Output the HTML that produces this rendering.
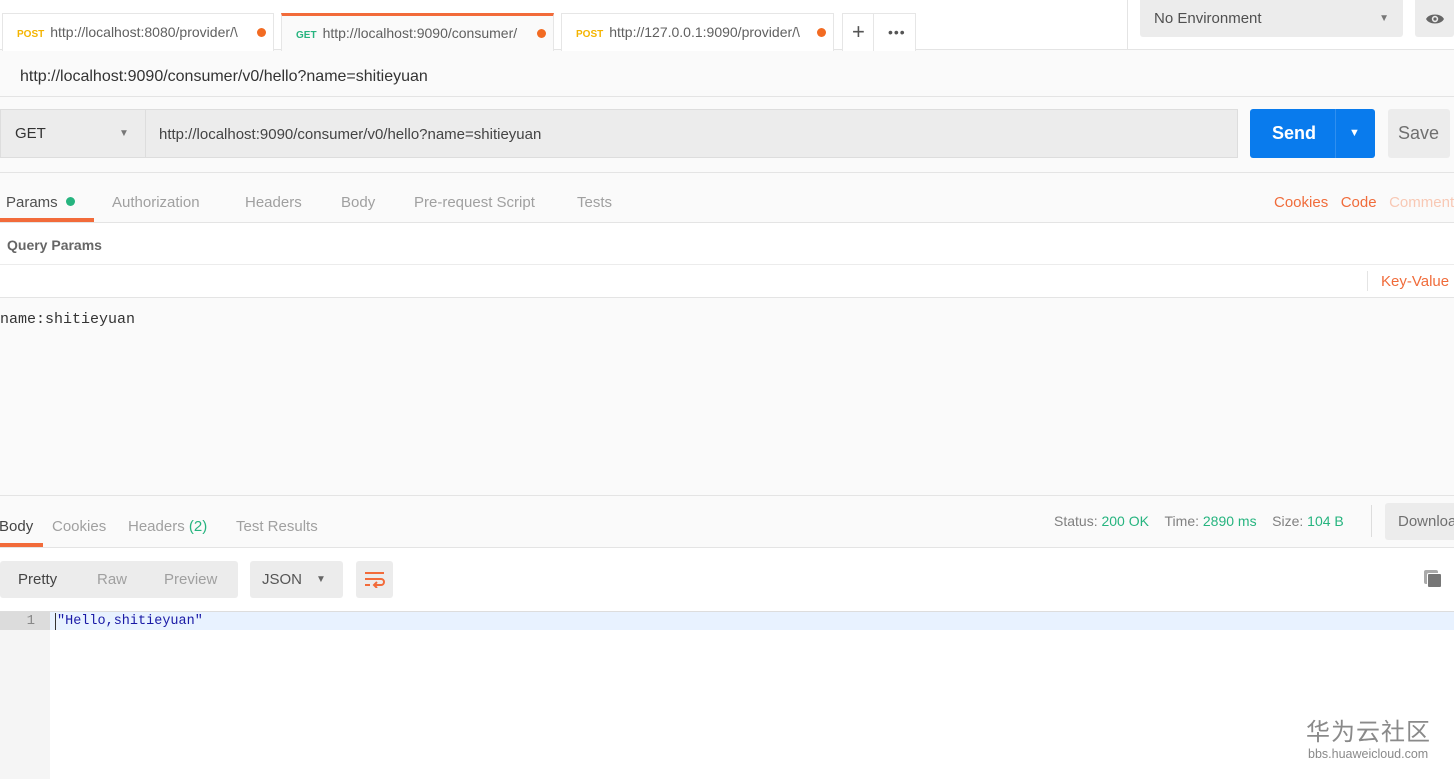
<!DOCTYPE html>
<html><head><meta charset="utf-8"><style>
*{margin:0;padding:0;box-sizing:border-box}
body{width:1454px;height:779px;overflow:hidden;background:#fafafa;font-family:"Liberation Sans",sans-serif;position:relative;color:#505050}
.a{position:absolute}
.tab{position:absolute;top:13px;height:38px;background:#fff;border:1px solid #e6e6e6;border-bottom:none;font-size:14px;color:#606060;line-height:36px;padding-left:14px;white-space:nowrap;overflow:hidden}
.m{font-size:10px;font-weight:bold;margin-right:6px}
.dot{position:absolute;right:7px;top:14px;width:9px;height:9px;border-radius:50%;background:#f26b22}
.gray{color:#a0a0a0}
.or{color:#f06c3b}
.gr{color:#26b47f}
</style></head><body>
<div class="a" style="left:0;top:0;width:1454px;height:50px;background:#fff;border-bottom:1px solid #e4e4e4"></div>
<div class="tab" style="left:2px;width:272px"><span class="m" style="color:#f4b400">POST</span>http://localhost:8080/provider/\<span class="dot"></span></div>
<div class="tab" style="left:281px;width:273px;border-top:3px solid #f26b3a;background:#fafafa;line-height:34px"><span class="m" style="color:#26b47f">GET</span>http://localhost:9090/consumer/<span class="dot" style="top:13px"></span></div>
<div class="tab" style="left:561px;width:273px"><span class="m" style="color:#f4b400">POST</span>http://127.0.0.1:9090/provider/\<span class="dot"></span></div>
<div class="tab" style="left:842px;width:74px;padding:0;font-size:22px;color:#555"><span class="a" style="left:9px;top:0">+</span><span class="a" style="left:30px;top:0;height:38px;border-left:1px solid #e6e6e6"></span><span class="a" style="left:45px;top:0;font-size:14px;letter-spacing:1px">•••</span></div>
<div class="a" style="left:1127px;top:0;width:1px;height:50px;background:#e4e4e4"></div>
<div class="a" style="left:1140px;top:0;width:263px;height:37px;background:#ececec;border-radius:0 0 3px 3px;font-size:15px;color:#505050;line-height:38px;padding-left:14px">No Environment<span class="a" style="right:14px;top:0;font-size:10px;color:#777">▼</span></div>
<div class="a" style="left:1415px;top:0;width:39px;height:37px;background:#ececec;border-radius:0 0 3px 3px"><svg class="a" style="left:10px;top:12px" width="20" height="14" viewBox="0 0 20 14"><path d="M1 7C4 1 16 1 19 7C16 13 4 13 1 7Z" fill="#666"/><circle cx="10" cy="7" r="3.2" fill="#ececec"/><circle cx="10" cy="7" r="1.6" fill="#666"/></svg></div>
<div class="a" style="left:20px;top:68px;font-size:16px;color:#333">http://localhost:9090/consumer/v0/hello?name=shitieyuan</div>
<div class="a" style="left:0;top:96px;width:1454px;height:1px;background:#e4e4e4"></div>
<div class="a" style="left:0;top:109px;width:146px;height:49px;background:#ececec;border:1px solid #ddd;font-size:15px;color:#333;line-height:48px;padding-left:14px">GET<span class="a" style="left:118px;top:0;font-size:10px;color:#777">▼</span></div>
<div class="a" style="left:146px;top:109px;width:1092px;height:49px;background:#ececec;border:1px solid #ddd;border-left:none;font-size:15px;color:#444;line-height:49px;padding-left:13px">http://localhost:9090/consumer/v0/hello?name=shitieyuan</div>
<div class="a" style="left:1250px;top:109px;width:125px;height:49px;background:#097bed;border-radius:3px;color:#fff;font-size:18px;font-weight:bold;line-height:49px;padding-left:22px">Send<span class="a" style="left:85px;top:0;height:49px;border-left:1px solid #2f8ff0"></span><span class="a" style="left:99px;top:0;font-size:11px">▼</span></div>
<div class="a" style="left:1388px;top:109px;width:62px;height:49px;background:#ececec;border-radius:3px;color:#707070;font-size:18px;line-height:49px;padding-left:10px">Save</div>
<div class="a" style="left:0;top:172px;width:1454px;height:1px;background:#e4e4e4"></div>
<div class="a" style="left:0;top:194px;font-size:15px;white-space:nowrap"><span style="position:absolute;left:6px;color:#505050">Params</span><span style="position:absolute;left:66px;top:3px;width:9px;height:9px;border-radius:50%;background:#26b47f"></span><span class="gray" style="position:absolute;left:112px">Authorization</span><span class="gray" style="position:absolute;left:245px">Headers</span><span class="gray" style="position:absolute;left:341px">Body</span><span class="gray" style="position:absolute;left:414px">Pre-request&nbsp;Script</span><span class="gray" style="position:absolute;left:577px">Tests</span></div>
<div class="a" style="left:0;top:218px;width:94px;height:4px;background:#f26b3a"></div>
<div class="a" style="left:1274px;top:194px;font-size:15px;white-space:nowrap"><span class="or">Cookies</span>&nbsp;&nbsp;&nbsp;<span class="or">Code</span>&nbsp;&nbsp;&nbsp;<span style="color:#f8c8b4">Comments</span></div>
<div class="a" style="left:0;top:222px;width:1454px;height:76px;background:#fff;border-top:1px solid #e4e4e4;border-bottom:1px solid #e4e4e4"></div>
<div class="a" style="left:0;top:264px;width:1454px;height:1px;background:#ececec"></div>
<div class="a" style="left:7px;top:237px;font-size:14px;font-weight:bold;color:#666">Query Params</div>
<div class="a" style="left:1367px;top:271px;width:1px;height:20px;background:#e4e4e4"></div>
<div class="a or" style="left:1381px;top:273px;font-size:15px;white-space:nowrap">Key-Value</div>
<div class="a" style="left:0;top:311px;font-family:'Liberation Mono',monospace;font-size:15px;color:#333">name:shitieyuan</div>
<div class="a" style="left:0;top:495px;width:1454px;height:1px;background:#e4e4e4"></div>
<div class="a" style="left:0;top:518px;font-size:15px;white-space:nowrap"><span style="position:absolute;left:-1px;color:#444">Body</span><span class="gray" style="position:absolute;left:52px">Cookies</span><span class="gray" style="position:absolute;left:128px">Headers&nbsp;<span class="gr">(2)</span></span><span class="gray" style="position:absolute;left:236px">Test&nbsp;Results</span></div>
<div class="a" style="left:0;top:543px;width:43px;height:4px;background:#f26b3a"></div>
<div class="a" style="left:1054px;top:513px;font-size:14px;white-space:nowrap;color:#808080">Status:&nbsp;<span class="gr">200 OK</span>&nbsp;&nbsp;&nbsp;&nbsp;Time:&nbsp;<span class="gr">2890 ms</span>&nbsp;&nbsp;&nbsp;&nbsp;Size:&nbsp;<span class="gr">104 B</span></div>
<div class="a" style="left:1371px;top:505px;width:1px;height:32px;background:#ddd"></div>
<div class="a" style="left:1385px;top:503px;width:80px;height:37px;background:#ececec;border-radius:3px;font-size:15px;color:#707070;line-height:37px;padding-left:13px;white-space:nowrap;overflow:hidden">Download</div>
<div class="a" style="left:0;top:547px;width:1454px;height:232px;background:#fff;border-top:1px solid #e4e4e4"></div>
<div class="a" style="left:0;top:561px;width:238px;height:37px;background:#ececec;border-radius:3px;font-size:15px;line-height:37px;white-space:nowrap"><span class="a" style="left:18px;color:#444">Pretty</span><span class="a gray" style="left:97px">Raw</span><span class="a gray" style="left:164px">Preview</span></div>
<div class="a" style="left:250px;top:561px;width:93px;height:37px;background:#ececec;border-radius:3px;font-size:15px;line-height:37px;padding-left:12px;color:#555">JSON<span class="a" style="left:66px;font-size:10px;color:#666">▼</span></div>
<div class="a" style="left:356px;top:561px;width:37px;height:37px;background:#ececec;border-radius:3px"><svg class="a" style="left:8px;top:10px" width="21" height="17" viewBox="0 0 21 17"><path d="M1 2H20M1 8H17a3 3 0 0 1 0 6H10M13 11l-3 3 3 3M1 14H6" stroke="#f26b3a" stroke-width="2" fill="none"/></svg></div>
<div class="a" style="left:1424px;top:570px;width:14px;height:14px;background:#aaa;border-radius:2px"></div>
<div class="a" style="left:1427px;top:573px;width:15px;height:15px;background:#777;border-radius:2px;border:1px solid #fff"></div>
<div class="a" style="left:0;top:611px;width:1454px;height:1px;background:#ddd"></div>
<div class="a" style="left:0;top:612px;width:50px;height:167px;background:#f5f5f5"></div>
<div class="a" style="left:0;top:612px;width:50px;height:18px;background:#dcdcdc;font-family:'Liberation Mono',monospace;font-size:14px;color:#888;text-align:right;padding-right:15px;line-height:18px">1</div>
<div class="a" style="left:50px;top:612px;width:1404px;height:18px;background:#e8f2ff"></div>
<div class="a" style="left:55px;top:613px;font-family:'Liberation Mono',monospace;font-size:13.5px;color:#1a1aa6;line-height:17px;border-left:1px solid #333;padding-left:1px">"Hello,shitieyuan"</div>
<div class="a" style="left:1306px;top:714px;font-family:'Noto Sans CJK SC',sans-serif;font-size:24px;color:#8a8a8a;letter-spacing:1px;line-height:32px">华为云社区</div>
<div class="a" style="left:1308px;top:747px;font-size:12.5px;color:#8a8a8a">bbs.huaweicloud.com</div>
</body></html>
